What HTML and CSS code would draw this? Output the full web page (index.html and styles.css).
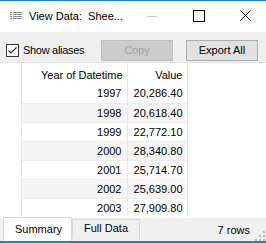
FILE: index.html
```html
<!DOCTYPE html>
<html lang="en">
<head>
  <meta charset="UTF-8" />
  <title>View Data</title>
  <link rel="stylesheet" href="styles.css">
</head>
<body>
  <div class="window">
    <div class="titlebar">
      <svg class="app-icon" width="12" height="7" viewBox="0 0 12 7">
        <g fill="#8a8a8a">
          <rect x="0" y="0" width="2" height="1"/><rect x="3" y="0" width="9" height="1"/>
          <rect x="0" y="2" width="2" height="1"/><rect x="3" y="2" width="9" height="1"/>
          <rect x="0" y="4" width="2" height="1"/><rect x="3" y="4" width="9" height="1"/>
          <rect x="0" y="6" width="2" height="1"/><rect x="3" y="6" width="9" height="1"/>
        </g>
      </svg>
      <span class="title">View Data:&nbsp; Shee...</span>
      <div class="win-controls">
        <span class="ctl minimize"></span>
        <span class="ctl maximize"></span>
        <span class="ctl close">
          <svg width="11" height="11" viewBox="0 0 11 11"><path d="M0.5 0.5 L10.5 10.5 M10.5 0.5 L0.5 10.5" stroke="#000" stroke-width="1"/></svg>
        </span>
      </div>
    </div>

    <div class="toolbar">
      <label class="check">
        <span class="box">
          <svg width="11" height="11" viewBox="0 0 11 11"><path d="M1.5 5.5 L4 8 L9.5 2.5" fill="none" stroke="#333" stroke-width="1.2"/></svg>
        </span>
        <span class="check-label">Show aliases</span>
      </label>
      <button class="btn disabled">Copy</button>
      <button class="btn">Export All</button>
    </div>

    <div class="grid">
      <table>
        <thead>
          <tr>
            <th class="rh"></th>
            <th class="c1">Year of Datetime</th>
            <th class="c2">Value</th>
          </tr>
        </thead>
        <tbody>
          <tr><td class="rh"></td><td>1997</td><td>20,286.40</td></tr>
          <tr class="alt"><td class="rh"></td><td>1998</td><td>20,618.40</td></tr>
          <tr><td class="rh"></td><td>1999</td><td>22,772.10</td></tr>
          <tr class="alt"><td class="rh"></td><td>2000</td><td>28,340.80</td></tr>
          <tr><td class="rh"></td><td>2001</td><td>25,714.70</td></tr>
          <tr class="alt"><td class="rh"></td><td>2002</td><td>25,639.00</td></tr>
          <tr><td class="rh"></td><td>2003</td><td>27,909.80</td></tr>
        </tbody>
      </table>
    </div>

    <div class="tabstrip">
      <div class="tab active">Summary</div>
      <div class="tab">Full Data</div>
      <span class="rowcount">7 rows</span>
      <svg class="grip" width="10" height="10" viewBox="0 0 10 10">
        <g fill="#b5b5b5">
          <rect x="8" y="0" width="2" height="2"/>
          <rect x="4" y="4" width="2" height="2"/><rect x="8" y="4" width="2" height="2"/>
          <rect x="0" y="8" width="2" height="2"/><rect x="4" y="8" width="2" height="2"/><rect x="8" y="8" width="2" height="2"/>
        </g>
      </svg>
    </div>
  </div>
</body>
</html>
```

FILE: styles.css
```css
* { box-sizing: border-box; }

body {
  margin: 0;
  font-family: 'Liberation Sans', Arial, sans-serif;
  font-size: 11px;
  color: #000;
  background: #fff;
}

.window {
  width: 266px;
  height: 243px;
  display: flex;
  flex-direction: column;
  border-top: 1px solid #1883d7;
  border-bottom: 2px solid #1883d7;
  overflow: hidden;
}

.titlebar {
  height: 31px;
  flex: none;
  display: flex;
  align-items: center;
  background: #fff;
  padding-left: 10px;
}

.app-icon {
  margin-top: -2px;
}

.title {
  margin-left: 7px;
  font-size: 11px;
  margin-top: -2px;
  white-space: nowrap;
}

.win-controls {
  margin-left: auto;
  display: flex;
  align-items: center;
  height: 100%;
}

.ctl {
  display: flex;
  align-items: center;
  justify-content: center;
  width: 46px;
  height: 100%;
}

.minimize::before {
  content: "";
  width: 10px;
  height: 1px;
  background: #c8c8c8;
}

.maximize::before {
  content: "";
  width: 10px;
  height: 10px;
  border: 1px solid #000;
  margin-top: -2px;
}

.close svg {
  margin-top: -2px;
}

.win-controls .minimize { margin-right: 1px; }
.win-controls .close { width: 46px; margin-right: -2px; }

.toolbar {
  height: 31px;
  flex: none;
  display: flex;
  align-items: center;
  background: #f0f0f0;
  padding: 3px 8px 0 6px;
  border-bottom: 1px solid #e3e3e3;
}

.check {
  display: flex;
  align-items: center;
  gap: 4px;
  margin-top: 3px;
  flex: none;
  white-space: nowrap;
}

.check-label {
  letter-spacing: -0.3px;
}

.box {
  width: 13px;
  height: 13px;
  border: 1px solid #333;
  background: #fff;
  display: flex;
  align-items: center;
  justify-content: center;
}

.btn {
  flex: none;
  width: 72px;
  height: 21px;
  font-family: inherit;
  font-size: 11px;
  color: #000;
  background: #e1e1e1;
  border: 1px solid #adadad;
  padding: 0;
  margin-top: 3px;
}

.btn.disabled {
  margin-left: auto;
  background: #cccccc;
  border-color: #bfbfbf;
  color: #a3a3a3;
}

.btn + .btn {
  margin-left: 13px;
}

.grid {
  flex: 1;
  background: #fff;
  overflow: hidden;
}

table {
  border-collapse: collapse;
}

th, td {
  padding: 0 4px 0 0;
  text-align: right;
  font-weight: normal;
  border-right: 1px solid #e8e8e8;
  white-space: nowrap;
}

th {
  height: 21px;
  padding-top: 3px;
}

td {
  height: 19px;
  border-top: 1px solid #ececec;
}

tbody tr:first-child td {
  border-top: none;
  height: 19px;
}

.rh {
  width: 21px;
  padding: 0;
  border-top: none;
  background: #fff;
}

.c1 { width: 106px; }
.c2 { width: 60px; }

td:nth-child(2) { padding-right: 5px; }

tr.alt td { background: #f5f5f5; }
tr.alt td.rh { background: #fff; }

.tabstrip {
  height: 23px;
  flex: none;
  display: flex;
  align-items: flex-end;
  background: #f0f0f0;
  padding-left: 3px;
  padding-right: 1px;
}

.tab {
  height: 20px;
  padding: 2px 11px 0;
  border: 1px solid #d9d9d9;
  border-bottom: none;
  margin-bottom: 2px;
  font-size: 11px;
}

.tab.active {
  background: #fff;
  height: 24px;
  margin-bottom: 0;
  padding: 5px 13px 0 11px;
  width: 69px;
}

.rowcount {
  margin-left: auto;
  margin-bottom: 5px;
  margin-right: 5px;
}
```
